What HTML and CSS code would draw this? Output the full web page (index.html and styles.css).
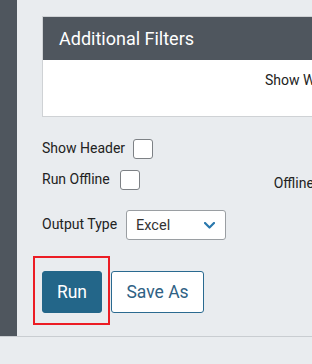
FILE: index.html
```html
<!DOCTYPE html>
<html>
<head>
<meta charset="utf-8">
<link rel="stylesheet" href="styles.css">
</head>
<body>
<div class="page">
  <div class="sidebar"></div>
  <div class="main">
    <div class="panel">
      <div class="panel-head">Additional Filters</div>
      <div class="panel-body">Show W</div>
    </div>
    <div class="row row-header">
      <span class="label">Show Header</span>
      <span class="check"></span>
    </div>
    <div class="row row-offline">
      <span class="label">Run Offline</span>
      <span class="check check-offline"></span>
      <span class="offline">Offline</span>
    </div>
    <div class="row row-output">
      <span class="label">Output Type</span>
      <div class="select">
        <span>Excel</span>
        <svg class="chev" width="11" height="7" viewBox="0 0 11 7"><path d="M1 1 L5.5 5.5 L10 1" fill="none" stroke="#2a78ad" stroke-width="2.2" stroke-linecap="round" stroke-linejoin="round"/></svg>
      </div>
    </div>
    <div class="buttons">
      <div class="run-wrap">
        <button class="btn btn-run">Run</button>
        <div class="highlight"></div>
      </div>
      <button class="btn btn-save">Save As</button>
    </div>
  </div>
</div>
</body>
</html>
```
FILE: styles.css
```css
html, body {
  margin: 0;
  padding: 0;
  background: #e9ecef;
  font-family: Roboto, "Liberation Sans", sans-serif;
  color: #222;
}
.page {
  display: flex;
  height: 336px;
  border-bottom: 1px solid #c9cdd1;
  overflow: hidden;
}
.sidebar {
  width: 17px;
  flex: none;
  background: #4f565e;
}
.main {
  flex: 1;
  min-width: 0;
  padding-left: 25px;
  padding-top: 16px;
  overflow: hidden;
  display: flex;
  flex-direction: column;
  align-items: flex-start;
}
.panel {
  width: 400px;
  flex: none;
  border: 1px solid #cfd2d5;
  background: #fff;
}
.panel-head {
  height: 43px;
  background: #4f565e;
  color: #fff;
  font-size: 18px;
  line-height: 43px;
  padding-left: 16px;
}
.panel-body {
  height: 56px;
  padding-left: 222px;
  font-size: 14px;
  line-height: 40px;
  color: #222;
  white-space: nowrap;
}
.row {
  display: flex;
  align-items: center;
  font-size: 14px;
  white-space: nowrap;
  flex: none;
}
.label { position: relative; top: -1px; }
.row-header { margin-top: 22px; height: 20px; }
.row-offline { margin-top: 11px; height: 20px; }
.row-output { margin-top: 20px; height: 30px; }
.check {
  width: 18px;
  height: 18px;
  border: 1px solid #7d8185;
  border-radius: 3px;
  background: #fff;
  margin-left: 8px;
  flex: none;
}
.check-offline { margin-left: 10px; }
.offline {
  margin-left: 134px;
  margin-top: 6px;
}
.select {
  margin-left: 9px;
  height: 28px;
  border: 1px solid #9a9ea2;
  border-radius: 3px;
  background: #fff;
  display: flex;
  align-items: center;
  justify-content: space-between;
  padding: 0 10px 0 9px;
  width: 79px;
  font-size: 14.5px;
  color: #333;
  flex: none;
}
.chev { margin-top: 1px; }
.buttons {
  margin-top: 31px;
  display: flex;
  gap: 9px;
  flex: none;
}
.run-wrap {
  position: relative;
}
.btn {
  height: 42px;
  border-radius: 3px;
  font-family: Roboto, "Liberation Sans", sans-serif;
  font-size: 17.5px;
  cursor: pointer;
  padding: 0;
}
.btn-run {
  width: 60px;
  background: #236689;
  border: 1px solid #236689;
  color: #fff;
  display: block;
}
.btn-save {
  width: 93px;
  background: #fff;
  border: 1px solid #2a6a90;
  color: #2f6184;
}
.highlight {
  position: absolute;
  left: -9px;
  top: -15px;
  width: 73px;
  height: 65px;
  border: 2px solid #ec1c24;
}
```
